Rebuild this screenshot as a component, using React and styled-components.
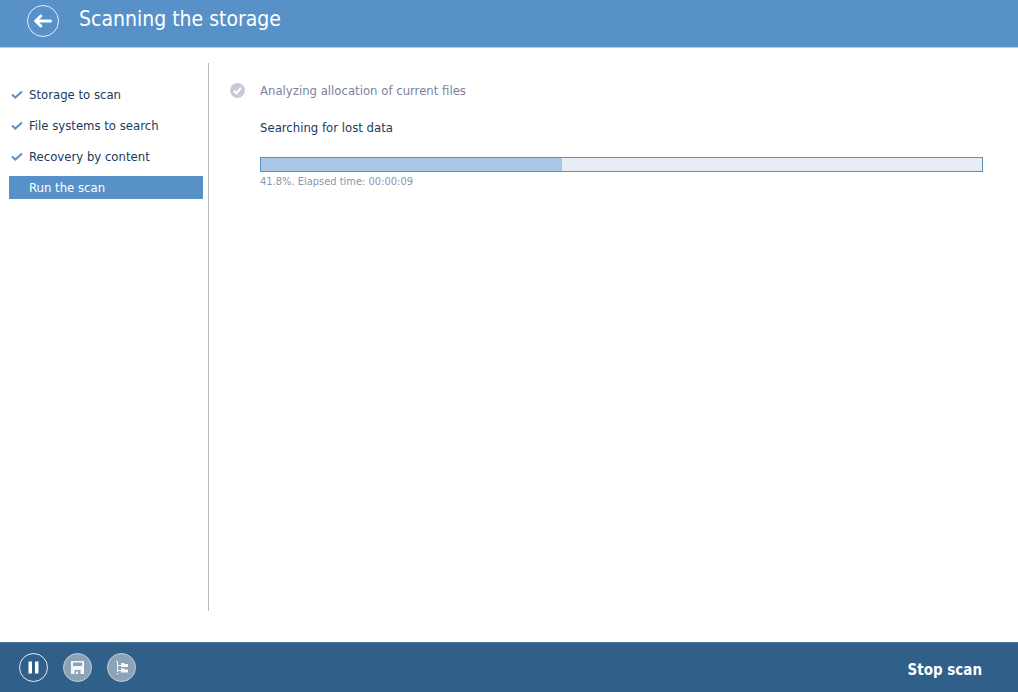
import React from 'react';
import styled, {createGlobalStyle} from 'styled-components';

const steps = [
    {label: 'Storage to scan', done: true},
    {label: 'File systems to search', done: true},
    {label: 'Recovery by content', done: true},
    {label: 'Run the scan', active: true},
];

const scan = {
    percent: 41.8,
    elapsed: '00:00:09',
};

const ArrowIcon = () => (
    <svg width="28" height="28" viewBox="0 0 28 28" fill="none" stroke="#fff" strokeWidth="3" aria-hidden="true">
        <path d="M7 14H21.5" strokeLinecap="round"/>
        <path d="M11.8 9L6.8 14L11.8 19" strokeLinecap="round" strokeLinejoin="round"/>
    </svg>
);

const TickIcon = () => (
    <svg width="12" height="10" viewBox="0 0 12 10" fill="none" stroke="#5891c8" strokeWidth="2" aria-hidden="true">
        <path d="M1 4.6L4.3 7.6L11 1.6"/>
    </svg>
);

const DoneIcon = () => (
    <svg width="15" height="15" viewBox="0 0 15 15" fill="none" aria-hidden="true">
        <circle cx="7.5" cy="7.5" r="7.5" fill="#c9cad8"/>
        <path d="M4 7.8L6.4 10.4L11 4.6" stroke="#fff" strokeWidth="2"/>
    </svg>
);

const PauseIcon = () => (
    <svg width="27" height="27" viewBox="0 0 27 27" fill="#fff" aria-hidden="true">
        <rect x="8.5" y="7.5" width="3.5" height="12"/>
        <rect x="15" y="7.5" width="3.5" height="12"/>
    </svg>
);

const SaveIcon = () => (
    <svg width="27" height="27" viewBox="0 0 27 27" aria-hidden="true">
        <path fillRule="evenodd" fill="#f4f6f8"
              d="M7 7H20V20H16.5V16H10.5V20H7ZM9 8.5V12H18V8.5ZM12 17.5H14V20H12Z"/>
    </svg>
);

const TreeIcon = () => (
    <svg width="27" height="27" viewBox="0 0 27 27" aria-hidden="true">
        <path d="M8 7.5H9.5V18M9.5 11.5H13M9.5 16.5H13" fill="none" stroke="#f4f6f8"/>
        <path d="M9 19H10V20.5H9Z" fill="#f4f6f8"/>
        <path d="M13 9H16L17 10H20V13H13ZM13 14.5H16L17 15.5H20V18.5H13Z" fill="#f4f6f8"/>
    </svg>
);

const App = () => {
    return <Page>
        <GlobalStyle/>

        <Header>
            <BackButton aria-label="Back"><ArrowIcon/></BackButton>
            <Title>Scanning the storage</Title>
        </Header>

        <Content>
            <Steps>
                {steps.map((step) => (
                    <Step key={step.label} $active={step.active}>
                        <StepMark>{step.done && <TickIcon/>}</StepMark>
                        {step.label}
                    </Step>
                ))}
            </Steps>

            <Tasks>
                <Task $done>
                    <TaskMark><DoneIcon/></TaskMark>
                    Analyzing allocation of current files
                </Task>
                <Task>
                    <TaskMark/>
                    <label htmlFor="scan">Searching for lost data</label>
                </Task>
                <ProgressArea>
                    <Progress id="scan" max="100" value={scan.percent}/>
                    <Status>{`${scan.percent}%. Elapsed time: ${scan.elapsed}`}</Status>
                </ProgressArea>
            </Tasks>
        </Content>

        <Footer>
            <Tools>
                <ToolButton aria-label="Pause"><PauseIcon/></ToolButton>
                <ToolButton aria-label="Save" $muted><SaveIcon/></ToolButton>
                <ToolButton aria-label="Folders" $muted><TreeIcon/></ToolButton>
            </Tools>
            <StopButton>Stop scan</StopButton>
        </Footer>
    </Page>;
}

const GlobalStyle = createGlobalStyle`
  * {
    box-sizing: border-box;
  }

  body {
    margin: 0;
    background: #fff;
    color: #1b3a5f;
    font-family: "DejaVu Sans Condensed", "Noto Sans", sans-serif;
  }

  button {
    padding: 0;
    font-family: inherit;
    cursor: pointer;
  }
`

const Page = styled.div`
  display: flex;
  flex-direction: column;
  min-height: 100vh;
`

const Header = styled.header`
  display: flex;
  align-items: flex-start;
  gap: 20px;
  height: 48px;
  padding: 5px 27px 0;
  background: #5891c8;
  border-bottom: 1px solid #c3c8d4;
`

const BackButton = styled.button`
  display: flex;
  align-items: center;
  justify-content: center;
  width: 32px;
  height: 32px;
  border: 1px solid #e4edf6;
  border-radius: 50%;
  background: none;
`

const Title = styled.h1`
  margin: 0;
  color: #fff;
  font-size: 21px;
  font-weight: 400;
  line-height: 28px;
`

const Content = styled.main`
  display: flex;
  flex: 1;
  padding: 15px 35px 31px 9px;
`

const Steps = styled.ol`
  display: flex;
  flex-direction: column;
  gap: 8px;
  width: 200px;
  margin: 0;
  padding: 20px 5px 0 0;
  border-right: 1px solid #b8b8b8;
  list-style: none;
`

const Step = styled.li`
  display: flex;
  align-items: center;
  height: 23px;
  color: ${({$active}) => $active ? '#fff' : '#1b3a5f'};
  background: ${({$active}) => $active ? '#5891c8' : 'none'};
  font-size: 13px;
`

const StepMark = styled.span`
  display: flex;
  width: 20px;
  padding-left: 2px;
`

const Tasks = styled.section`
  flex: 1;
  padding: 17px 0 0 21px;
`

const Task = styled.div`
  display: flex;
  align-items: center;
  height: 20px;
  margin-bottom: 17px;
  color: ${({$done}) => $done ? '#7c829e' : '#1b3a5f'};
  font-size: 13px;
`

const TaskMark = styled.span`
  display: flex;
  width: 30px;
`

const ProgressArea = styled.div`
  padding: 3px 0 0 30px;
`

const Progress = styled.progress`
  display: block;
  width: 100%;
  height: 15px;
  border: 1px solid #5891c8;
  background: #e8edf5;
  appearance: none;

  &::-webkit-progress-bar {
    background: #e8edf5;
  }

  &::-webkit-progress-value {
    background: #a9c8e6;
  }
`

const Status = styled.p`
  margin: 2px 0 0;
  color: #8c95ad;
  font-size: 11px;
  line-height: 16px;
`

const Footer = styled.footer`
  display: flex;
  align-items: center;
  justify-content: space-between;
  height: 50px;
  padding: 0 36px 0 19px;
  background: #30608a;
  border-top: 1px solid #4a779f;
`

const Tools = styled.div`
  display: flex;
  gap: 15px;
`

const ToolButton = styled.button`
  display: flex;
  width: 29px;
  height: 29px;
  border: 1px solid ${({$muted}) => $muted ? '#c3ced9' : '#e6edf3'};
  border-radius: 50%;
  background: ${({$muted}) => $muted ? '#8ca2b7' : 'none'};
`

const StopButton = styled.button`
  padding-top: 4px;
  border: 0;
  background: none;
  color: #fff;
  font-size: 15px;
  font-weight: 700;
  line-height: 24px;
`

export default App;
